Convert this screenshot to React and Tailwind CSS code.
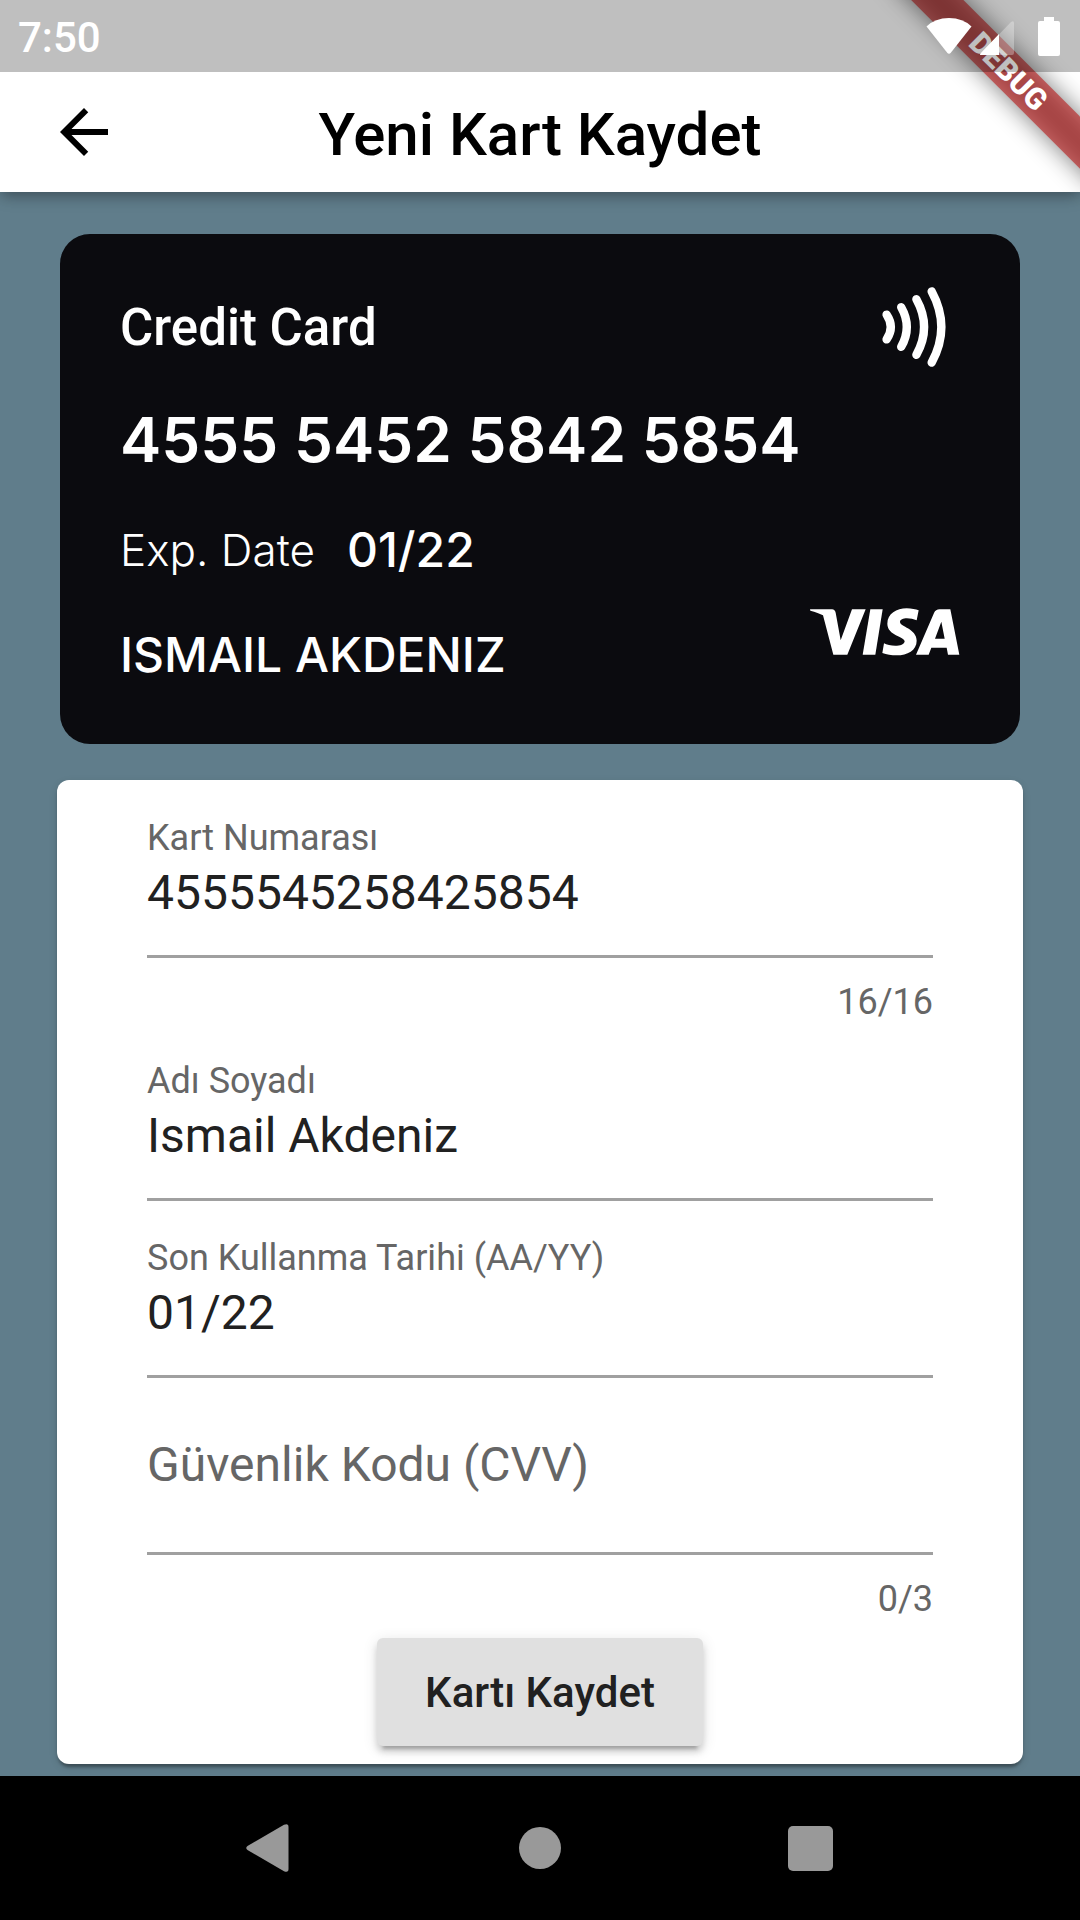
import React, { useState } from "react";

function BackArrowIcon() {
  return (
    <svg viewBox="0 0 24 24" className="size-[72px]" fill="currentColor" aria-hidden="true">
      <path d="M20 11H7.83l5.59-5.59L12 4l-8 8 8 8 1.41-1.41L7.83 13H20v-2z" />
    </svg>
  );
}

function WifiIcon() {
  return (
    <svg viewBox="0 0 46 36" className="h-9 w-[46px]" fill="white" aria-hidden="true">
      <path d="M0.5 8.5 Q9 0 23 0 Q37 0 45.5 8.5 L25 34.5 Q23 37 21 34.5 Z" />
    </svg>
  );
}

function SignalIcon() {
  return (
    <svg viewBox="0 0 34 34" className="size-[34px]" aria-hidden="true">
      <path d="M1 34 Q-1 34 1 32 L31 1 Q34 -1 34 2 V32 Q34 34 32 34 Z" fill="white" fillOpacity="0.3" />
      <path d="M19 13 V34 H1 Q-1 34 1 32 Z" fill="white" />
    </svg>
  );
}

function BatteryIcon() {
  return (
    <svg viewBox="0 0 22 39" className="h-[39px] w-[22px]" fill="white" aria-hidden="true">
      <path d="M6 0H16V4H20Q22 4 22 6V37Q22 39 20 39H2Q0 39 0 37V6Q0 4 2 4H6Z" />
    </svg>
  );
}

function ContactlessIcon() {
  return (
    <svg
      viewBox="880 285 68 84"
      className="h-[84px] w-[68px]"
      fill="none"
      stroke="white"
      strokeWidth="8.4"
      strokeLinecap="round"
      role="img"
      aria-label="Contactless"
    >
      <path d="M886.6 314.6 Q895 327 886.6 339.4" />
      <path d="M901.2 307.2 Q912.4 327 901.2 346.8" />
      <path d="M916.4 299.2 Q931.8 327 916.4 354.8" />
      <path d="M931.7 291.4 Q951 327 931.7 362.6" />
    </svg>
  );
}

function VisaLogo() {
  return (
    <svg viewBox="150 140 450 150" className="h-[50px] w-[150px]" fill="white" role="img" aria-label="VISA">
      <path d="M150 147H216Q225 148 227 157L242 240L276 147H317L262 283H220L189 165C181 160 166 155 151 151Z" />
      <path d="M331 147H368L346 283H308Z" />
      <path d="M476 150L470 180C450 171 420 171 420 185C420 199 470 205 470 241C470 270 442 285 410 285C394 285 380 283 367 278L372 249C388 259 433 261 434 243C434 228 382 226 382 190C382 160 410 144 440 144C455 144 467 147 476 150Z" />
      <path
        fillRule="evenodd"
        d="M468 283L522 158Q527 147 539 147H571L598 283H564L560 262H514L506 283ZM525 235H554L544 184Z"
      />
    </svg>
  );
}

function DebugBanner() {
  return (
    <div className="pointer-events-none absolute top-0 right-0 size-[240px] overflow-hidden">
      <div className="absolute -top-[79px] -right-[79px] flex size-[300px] rotate-45 items-center">
        <div className="absolute inset-x-0 h-[37px] bg-black/50 blur-[12px]" />
        <div className="relative flex h-[37px] w-full items-center justify-center bg-[#b71c1c]/63 pt-0.5 text-[30px] leading-none font-black text-white">
          DEBUG
        </div>
      </div>
    </div>
  );
}

function Field({ id, label, value, onChange, max, inputMode = "text" }) {
  const filled = value !== "";
  return (
    <div>
      <div className="grid h-[177px] items-start border-b-3 border-[#a0a0a0]">
        <label
          htmlFor={id}
          className={
            filled
              ? "pointer-events-none col-start-1 row-start-1 mt-9 text-[36px] leading-[42px] text-[#666]"
              : "pointer-events-none col-start-1 row-start-1 mt-[59px] text-[48px] leading-[56px] text-[#666]"
          }
        >
          {label}
        </label>
        <input
          id={id}
          value={value}
          maxLength={max}
          inputMode={inputMode}
          onChange={(e) => onChange(e.target.value)}
          className={
            filled
              ? "col-start-1 row-start-1 mt-[84px] h-14 w-full bg-transparent text-[48px] text-[#212121] outline-none"
              : "col-start-1 row-start-1 mt-[59px] h-14 w-full bg-transparent text-[48px] text-[#212121] outline-none"
          }
        />
      </div>
      {max && (
        <p className="pt-[23px] pb-px text-right text-[36px] leading-[42px] text-[#666]">
          {value.length}/{max}
        </p>
      )}
    </div>
  );
}

export default function App() {
  const [number, setNumber] = useState("4555545258425854");
  const [name, setName] = useState("Ismail Akdeniz");
  const [expiry, setExpiry] = useState("01/22");
  const [cvv, setCvv] = useState("");

  return (
    <div className="flex min-h-screen flex-col bg-[#607d8b] font-['Roboto',sans-serif]">
      <header className="relative z-10 bg-white shadow-[0_6px_12px_-3px_rgba(0,0,0,0.2),0_4px_16px_rgba(0,0,0,0.2)]">
        <DebugBanner />
        <div className="relative flex h-[72px] items-center justify-between bg-black/25 pr-5 pl-[18px]">
          <span className="pt-[3px] text-[42px] leading-none font-medium text-white">7:50</span>
          <div className="flex items-center">
            <WifiIcon />
            <div className="mt-1 mr-6 ml-2">
              <SignalIcon />
            </div>
            <BatteryIcon />
          </div>
        </div>
        <div className="grid h-[120px] grid-cols-[72px_1fr_72px] items-center px-12">
          <button type="button" aria-label="Geri" className="text-black">
            <BackArrowIcon />
          </button>
          <h1 className="pt-1.5 text-center text-[60px] leading-[70px] font-medium text-black">Yeni Kart Kaydet</h1>
        </div>
      </header>

      <main className="flex-1 px-[57px] pt-[42px] pb-3">
        <section className="mx-[3px] rounded-[30px] bg-[#0b0b0f] px-[60px] pt-[51px] pb-[59px] text-white">
          <div className="flex items-center justify-between pr-3">
            <h2 className="pt-0.5 text-[51px] leading-[60px] font-medium">Credit Card</h2>
            <ContactlessIcon />
          </div>
          <p className="mt-[31px] font-['Inter',sans-serif] text-[62px] leading-[80px] font-semibold">
            {number.replace(/(.{4})(?=.)/g, "$1 ")}
          </p>
          <div className="mt-[42px] flex items-end justify-between font-['Inter',sans-serif]">
            <div>
              <p className="flex items-center gap-8 leading-[56px]">
                <span className="text-[44px] font-light">Exp. Date</span>
                <span className="text-[48px] font-medium">{expiry}</span>
              </p>
              <p className="mt-[47px] text-[48px] leading-[60px] font-medium">{name.toUpperCase()}</p>
            </div>
            <div className="mb-7">
              <VisaLogo />
            </div>
          </div>
        </section>

        <form
          onSubmit={(e) => e.preventDefault()}
          className="mt-9 rounded-xl bg-white px-[90px] pt-px shadow-[0_6px_3px_-3px_rgba(0,0,0,0.2),0_3px_3px_rgba(0,0,0,0.14),0_3px_9px_rgba(0,0,0,0.12)]"
        >
          <Field id="number" label="Kart Numarası" value={number} onChange={setNumber} max={16} inputMode="numeric" />
          <Field id="name" label="Adı Soyadı" value={name} onChange={setName} />
          <Field id="expiry" label="Son Kullanma Tarihi (AA/YY)" value={expiry} onChange={setExpiry} />
          <Field id="cvv" label="Güvenlik Kodu (CVV)" value={cvv} onChange={setCvv} max={3} inputMode="numeric" />
          <div className="flex justify-center pt-[17px] pb-[18px]">
            <button
              type="submit"
              className="h-[108px] rounded-md bg-[#e0e0e0] px-12 text-[42px] font-medium text-[#212121] shadow-[0_9px_3px_-6px_rgba(0,0,0,0.2),0_6px_6px_rgba(0,0,0,0.14),0_3px_15px_rgba(0,0,0,0.12)]"
            >
              Kartı Kaydet
            </button>
          </div>
        </form>
      </main>

      <nav className="grid h-36 grid-cols-3 place-items-center bg-black px-[12.5%]">
        <button type="button" aria-label="Geri">
          <svg viewBox="0 0 48 48" className="size-12" fill="#999" aria-hidden="true">
            <path d="M1.5 26 Q-1 24 1.5 22 L38 .8 Q42.500 -1 42.500 3 V45 Q42.500 49 38 47.200 Z" />
          </svg>
        </button>
        <button type="button" aria-label="Ana ekran">
          <span className="block size-[42px] rounded-full bg-[#999]" />
        </button>
        <button type="button" aria-label="Son uygulamalar">
          <span className="block size-[45px] rounded-[5px] bg-[#999]" />
        </button>
      </nav>
    </div>
  );
}
